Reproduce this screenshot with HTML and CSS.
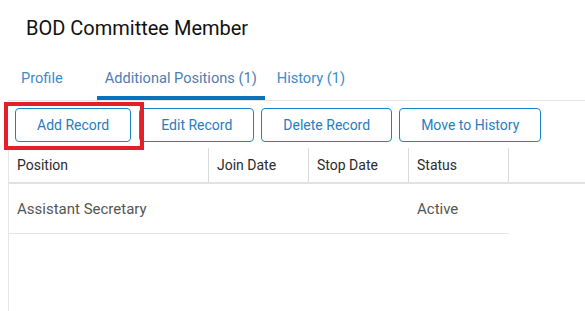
FILE: index.html
```html
<!DOCTYPE html>
<html lang="en">
<head>
    <meta charset="UTF-8">
    <meta name="viewport" content="width=device-width, initial-scale=1.0">
    <title>BOD Committee Member</title>
    <link rel="stylesheet" href="styles.css">
</head>
<body>
    <div class="page">
        <h1 class="title">BOD Committee Member</h1>

        <nav class="tabs">
            <a class="tab tab-first">Profile</a>
            <a class="tab active">Additional Positions (1)</a>
            <a class="tab">History (1)</a>
        </nav>

        <div class="toolbar">
            <div class="highlight-wrap">
                <button type="button" class="btn">Add Record</button>
                <span class="highlight"></span>
            </div>
            <button type="button" class="btn">Edit Record</button>
            <button type="button" class="btn">Delete Record</button>
            <button type="button" class="btn">Move to History</button>
        </div>

        <div class="grid">
            <div class="grid-head">
                <div class="cell col-wide">Position</div>
                <div class="cell">Join Date</div>
                <div class="cell">Stop Date</div>
                <div class="cell">Status</div>
            </div>
            <div class="grid-row">
                <div class="cell col-wide">Assistant Secretary</div>
                <div class="cell"></div>
                <div class="cell"></div>
                <div class="cell">Active</div>
            </div>
        </div>
    </div>
</body>
</html>
```

FILE: styles.css
```css
* {
    box-sizing: border-box;
}

body {
    margin: 0;
    font-family: Roboto, "Liberation Sans", Arial, sans-serif;
    background-color: #fff;
}

.page {
    height: 100vh;
    display: flex;
    flex-direction: column;
    overflow: hidden;
}

.title {
    margin: 16px 0 0 26px;
    font-size: 20px;
    line-height: 24px;
    font-weight: 400;
    color: #111;
}

.tabs {
    display: flex;
    margin-left: 8px;
    border-bottom: 1px solid #e4e4e4;
}

.tab {
    padding: 28px 8px 8px 8px;
    font-size: 14.6px;
    line-height: 20px;
    color: #3a8bcf;
    border-bottom: 4px solid transparent;
    cursor: pointer;
}

.tab-first {
    margin-left: 5px;
    margin-right: 26px;
}

.tab.active {
    color: #4f7db3;
    border-bottom-color: #0b72b8;
    margin-right: 4px;
}

.toolbar {
    display: flex;
    margin: 7px 0 0 15px;
}

.btn {
    height: 34px;
    padding: 0 21px;
    margin-right: 7px;
    font-family: inherit;
    font-size: 14px;
    color: #2a7cc0;
    background-color: #fff;
    border: 1px solid #1a86c9;
    border-radius: 4px;
    cursor: pointer;
}

.highlight-wrap {
    position: relative;
    display: flex;
    margin-right: 1px;
}

.highlight {
    position: absolute;
    left: -11px;
    top: -6px;
    width: 140px;
    height: 48px;
    border: 4px solid #e3202a;
    pointer-events: none;
}

.grid {
    flex: 1;
    margin: 6px 0 0 8px;
    border-left: 1px solid #e6e6e6;
}

.grid-head {
    display: flex;
    height: 36px;
    border-bottom: 2px solid #e2e2e2;
    font-size: 14px;
    color: #2b2b2b;
}

.grid-head .cell {
    border-right: 1px solid #dadada;
}

.grid-row {
    display: flex;
    width: 500px;
    height: 50px;
    border-bottom: 1px solid #e4e4e4;
    font-size: 15px;
    color: #555;
}

.cell {
    width: 100px;
    padding-left: 8px;
    display: flex;
    align-items: center;
    line-height: 20px;
}

.col-wide {
    width: 200px;
}
```
